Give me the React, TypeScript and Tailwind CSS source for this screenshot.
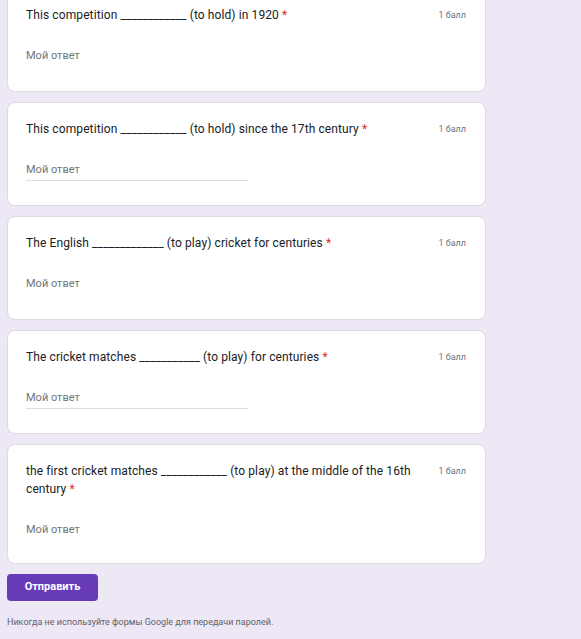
const questions = [
  { text: "This competition ____________ (to hold) in 1920", line: false },
  { text: "This competition ____________ (to hold) since the 17th century", line: true },
  { text: "The English _____________ (to play) cricket for centuries", line: false },
  { text: "The cricket matches ___________ (to play) for centuries", line: true },
  { text: "the first cricket matches ____________ (to play) at the middle of the 16th century", line: false, tall: true },
];

const Card = ({ text, line, tall }: { text: string; line: boolean; tall?: boolean }) => {
  return (
    <div
      className={`bg-white rounded-[8px] border border-[#dadce0] pt-[17px] pl-[18px] pr-[19px] ${
        tall ? "pb-[22px]" : "pb-[24px]"
      }`}
    >
      <div className="flex justify-between gap-6">
        <div className="text-[12px] leading-[18px] text-[#202124] tracking-[0.1px]">
          {text} <span className="text-[#d93025]">*</span>
        </div>
        <div className="text-[9px] leading-[18px] text-[#70757a] whitespace-nowrap">1 балл</div>
      </div>
      <div className={`mt-[24px] w-[222px] pb-[2px] border-b ${line ? "border-[#dadce0]" : "border-transparent"}`}>
        <span className="text-[11px] leading-[16px] block text-[#70757a]">Мой ответ</span>
      </div>
    </div>
  );
};

export default function App() {
  return (
    <div
      className="min-h-screen bg-[#ede7f6] overflow-hidden"
      style={{ fontFamily: "Roboto, 'Noto Sans', sans-serif" }}
    >
      <div className="w-[479px] ml-[7px] -mt-[12px] flex flex-col gap-[10px]">
        {questions.map((q, i) => (
          <Card key={i} text={q.text} line={q.line} tall={q.tall} />
        ))}
      </div>
      <div className="ml-[7px] mt-[9px]">
        <button className="w-[91px] h-[27px] rounded-[4px] bg-[#673ab7] text-white text-[11px] font-bold">
          Отправить
        </button>
        <div className="mt-[15px] text-[9px] text-[#5f6368]">
          Никогда не используйте формы Google для передачи паролей.
        </div>
      </div>
    </div>
  );
}
